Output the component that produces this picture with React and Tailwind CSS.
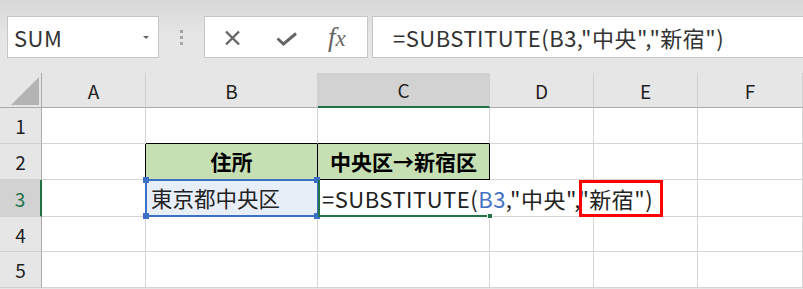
import React from 'react'

const FONT = { fontFamily: '"Noto Sans CJK JP", "Noto Sans", sans-serif' }

const cols = ['A', 'B', 'C', 'D', 'E', 'F']

function ColHeader({ label, active }) {
  return (
    <div
      className={
        'flex items-center justify-center text-[19px] leading-none border-r ' +
        (active
          ? 'bg-[#d2d2d2] border-r-[#d0d0d0] border-b-2 border-b-[#217346] text-[#1f1f1f]'
          : 'bg-[#e6e6e6] border-r-[#d0d0d0] border-b border-b-[#ababab] text-[#1f1f1f]')
      }
    >
      {label}
    </div>
  )
}

function RowHeader({ n, active }) {
  return (
    <div
      className={
        'flex items-center justify-center text-[19px] leading-none border-b border-b-[#d0d0d0] ' +
        (active
          ? 'bg-[#d2d2d2] border-r-2 border-r-[#217346] text-[#217346]'
          : 'bg-[#e6e6e6] border-r border-r-[#ababab] text-[#1f1f1f]')
      }
    >
      {n}
    </div>
  )
}

function Cell({ bg = 'bg-white', className = '', children }) {
  return <div className={'border-r border-b border-[#d4d4d4] ' + bg + ' ' + className}>{children}</div>
}

function Handle({ className }) {
  return <div className={'absolute w-[6px] h-[6px] bg-[#3a70c6] ' + className} />
}

export default function App() {
  return (
    <div className="w-[803px] h-[289px] overflow-hidden bg-[#e6e6e6] text-[#1f1f1f]" style={FONT}>
      {/* formula bar */}
      <div className="h-[73px] bg-gradient-to-b from-[#d8d8d8] via-[#e6e6e6] to-[#e6e6e6] pt-4 flex items-start">
        <div className="ml-[7px] w-[152px] h-[42px] bg-white border border-[#c6c6c6] flex items-center justify-between pl-[6px] pr-[9px]">
          <span className="text-[22px] leading-none text-[#333] tracking-[0.5px]">SUM</span>
          <span className="w-0 h-0 border-l-[3px] border-r-[3px] border-t-[3px] border-l-transparent border-r-transparent border-t-[#666]" />
        </div>
        <div className="w-[45px] h-[42px] flex flex-col items-center justify-center gap-[3px]">
          <span className="w-[3px] h-[3px] bg-[#a6a6a6]" />
          <span className="w-[3px] h-[3px] bg-[#a6a6a6]" />
          <span className="w-[3px] h-[3px] bg-[#a6a6a6]" />
        </div>
        <div className="w-[164px] h-[42px] bg-white border border-[#c6c6c6] flex items-center pl-[18px]">
          <svg width="20" height="16" viewBox="0 0 20 16" className="mt-[2px]">
            <path d="M3 1.5 L16 14.5 M16 1.5 L3 14.5" stroke="#666" strokeWidth="2.4" fill="none" />
          </svg>
          <svg width="22" height="14" viewBox="0 0 22 14" className="ml-[33px] mt-[4px]">
            <path d="M1.5 6.5 L7.5 12 L20 1.5" stroke="#666" strokeWidth="3" fill="none" strokeLinejoin="miter" />
          </svg>
          <span
            className="ml-[30px] text-[27px] leading-none italic text-[#666] whitespace-nowrap"
            style={{ fontFamily: '"Liberation Serif", serif' }}
          >
            f<span className="text-[23px]">x</span>
          </span>
        </div>
        <div className="ml-[4px] flex-1 h-[42px] bg-white border border-r-0 border-[#c6c6c6] flex items-center pl-[20px]">
          <span className="text-[22px] leading-none text-[#333] whitespace-nowrap tracking-[0.5px]">=SUBSTITUTE(B3,"中央","新宿")</span>
        </div>
      </div>

      {/* sheet */}
      <div className="grid grid-cols-[42px_104px_172px_172px_104px_104px_105px] grid-rows-[35px_36px_36px_37px_35px_36px] bg-white">
        <div className="relative bg-[#e6e6e6] border-r border-r-[#ababab] border-b border-b-[#ababab]">
          <svg width="29" height="28" viewBox="0 0 29 28" className="absolute left-[11px] top-[4px]">
            <polygon points="28,0 28,28 0,28" fill="#b4b4b4" />
          </svg>
        </div>
        {cols.map((c) => (
          <ColHeader key={c} label={c} active={c === 'C'} />
        ))}

        {/* row 1 */}
        <RowHeader n={1} />
        <Cell />
        <Cell className="border-b-black" />
        <Cell className="border-b-black" />
        <Cell />
        <Cell />
        <Cell />

        {/* row 2 */}
        <RowHeader n={2} />
        <Cell className="border-r-black" />
        <Cell bg="bg-[#c6e0b4]" className="border-r-black border-b-black flex items-center justify-center">
          <span className="text-[21px] leading-none font-bold text-black">住所</span>
        </Cell>
        <Cell bg="bg-[#c6e0b4]" className="border-r-black border-b-black flex items-center justify-center">
          <span className="text-[21px] leading-none font-bold text-black whitespace-nowrap">中央区→新宿区</span>
        </Cell>
        <Cell />
        <Cell />
        <Cell />

        {/* row 3 */}
        <RowHeader n={3} active />
        <Cell />
        <Cell bg="bg-[#e8eef8]" className="relative flex items-center pl-[5px]">
          <span className="text-[21.5px] leading-none text-[#222] whitespace-nowrap">東京都中央区</span>
          <div className="absolute -left-[1px] -top-[1px] w-[174px] h-[38px] border-2 border-[#3a70c6]" />
          <Handle className="-left-[3px] -top-[3px]" />
          <Handle className="-right-[3px] -top-[3px]" />
          <Handle className="-left-[3px] -bottom-[3px]" />
          <Handle className="-right-[3px] -bottom-[3px]" />
        </Cell>
        <Cell className="col-span-3 relative flex items-center pl-[4px]">
          <span className="text-[22px] leading-none text-[#222] whitespace-nowrap tracking-[0.5px]">
            =SUBSTITUTE(<span className="text-[#4472c4]">B3</span>,"中央","新宿")
          </span>
          <div className="absolute left-0 top-0 w-[2px] h-[37px] bg-[#217346]" />
          <div className="absolute left-0 bottom-[-1px] w-[172px] h-[2px] bg-[#217346]" />
          <div className="absolute left-[169px] bottom-[-3px] w-[6px] h-[6px] bg-[#217346] border border-white" />
          <div className="absolute left-[261px] top-0 w-[84px] h-[37px] border-[3px] border-[#ff0000]" />
        </Cell>
        <Cell />

        {/* row 4 */}
        <RowHeader n={4} />
        <Cell />
        <Cell />
        <Cell />
        <Cell />
        <Cell />
        <Cell />

        {/* row 5 */}
        <RowHeader n={5} />
        <Cell />
        <Cell />
        <Cell />
        <Cell />
        <Cell />
        <Cell />
      </div>
    </div>
  )
}
